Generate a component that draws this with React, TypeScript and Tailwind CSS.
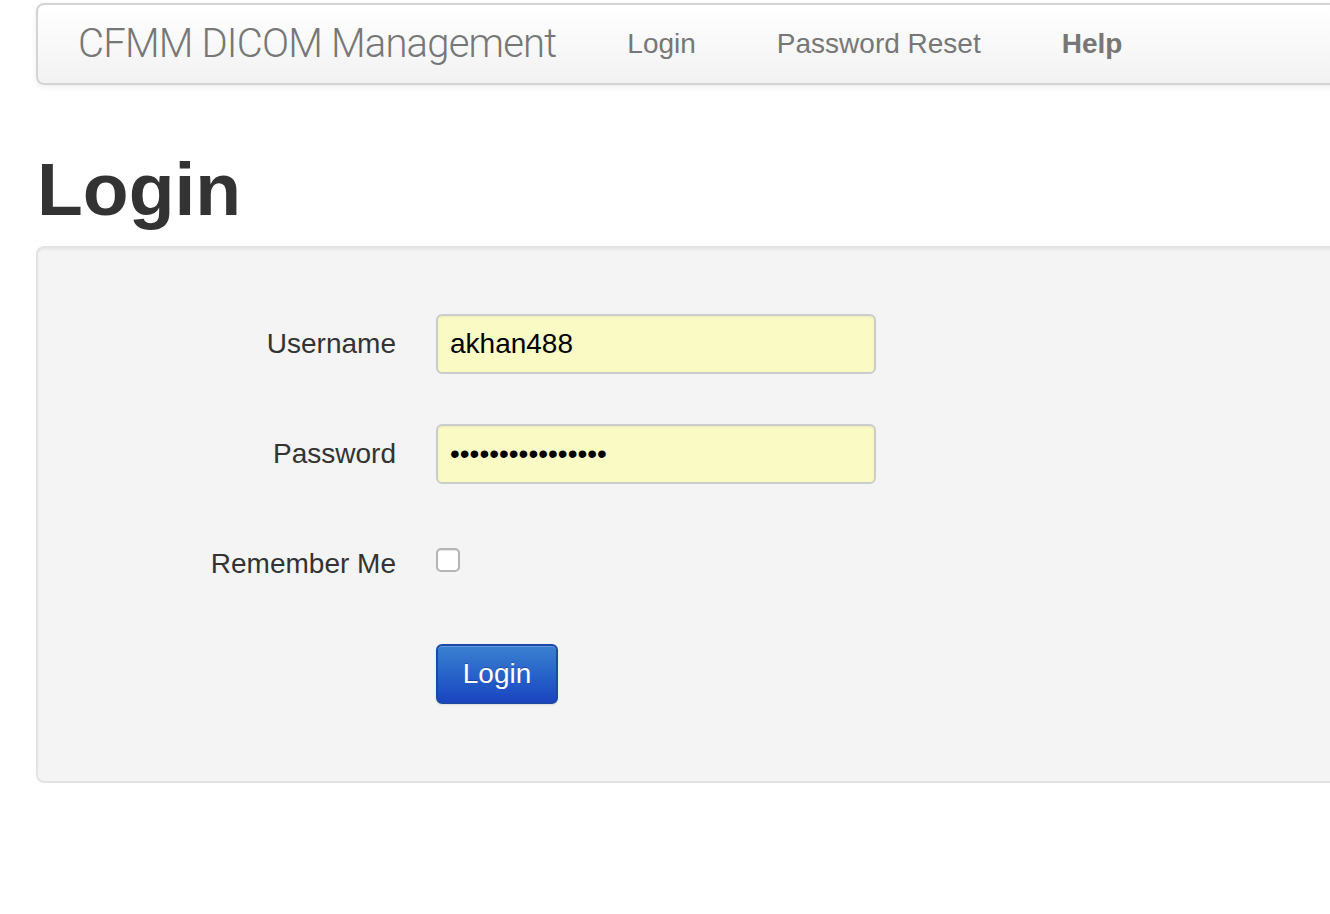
import React from 'react';

const font = { fontFamily: '"Liberation Sans", Arial, sans-serif' };

const NavBar = () => (
  <div className="h-[82px] w-[1320px] rounded-[8px] border-2 border-[#d4d4d4] bg-gradient-to-b from-white to-[#f2f2f2] shadow-[0_2px_6px_rgba(0,0,0,0.07)] flex items-center">
    <span className="pl-[40px] pr-[71px] text-[40px] leading-none text-[#777] font-light tracking-[-0.8px]" style={{ fontFamily: 'Roboto, "Liberation Sans", sans-serif' }}>
      CFMM DICOM Management
    </span>
    <nav className="flex items-center gap-[81px] text-[28px] text-[#777]">
      <a className="cursor-pointer">Login</a>
      <a className="cursor-pointer">Password Reset</a>
      <a className="cursor-pointer font-bold">Help</a>
    </nav>
  </div>
);

const Field = ({ label, children }: { label: string; children: React.ReactNode }) => (
  <div className="flex h-[60px] items-start">
    <label className="w-[320px] text-right text-[28px] leading-[60px] text-[#333]">{label}</label>
    <div className="ml-[40px]">{children}</div>
  </div>
);

const inputCls =
  'h-[60px] w-[440px] rounded-[6px] border-2 border-[#ccc] bg-[#fafbc4] px-[12px] text-[28px] text-black outline-none shadow-[inset_0_1px_2px_rgba(0,0,0,0.08)]';

export default function App() {
  return (
    <div className="h-screen w-full overflow-hidden bg-white" style={font}>
      <div className="ml-[36px] pt-[3px]">
        <NavBar />
        <h1 className="mt-[64px] mb-[17px] pl-[1px] text-[75px] font-bold leading-[80px] text-[#333]">Login</h1>
        <div className="w-[1320px] rounded-[8px] border-2 border-[#e3e3e3] bg-[#f4f4f4] pl-[38px] pt-[66px] pb-[77px] shadow-[inset_0_2px_2px_rgba(0,0,0,0.05)]">
          <div className="flex flex-col gap-[50px]">
            <Field label="Username">
              <input className={inputCls} readOnly defaultValue="akhan488" />
            </Field>
            <Field label="Password">
              <input className={inputCls} type="password" readOnly defaultValue="abcdefghijklmnop" />
            </Field>
            <Field label="Remember Me">
              <div className="mt-[14px] h-[24px] w-[24px] rounded-[5px] border-2 border-[#b5b5b5] bg-white shadow-[inset_0_1px_1px_rgba(0,0,0,0.1)]" />
            </Field>
            <div className="flex h-[60px]">
              <button className="ml-[360px] h-[60px] w-[122px] rounded-[6px] border-2 border-[#1e48a8] bg-gradient-to-b from-[#3b80d1] to-[#1b44c0] text-[28px] text-white [text-shadow:0_-1px_0_rgba(0,0,0,0.25)] shadow-[inset_0_1px_0_rgba(255,255,255,0.2),0_1px_2px_rgba(0,0,0,0.1)]">
                Login
              </button>
            </div>
          </div>
        </div>
      </div>
    </div>
  );
}
